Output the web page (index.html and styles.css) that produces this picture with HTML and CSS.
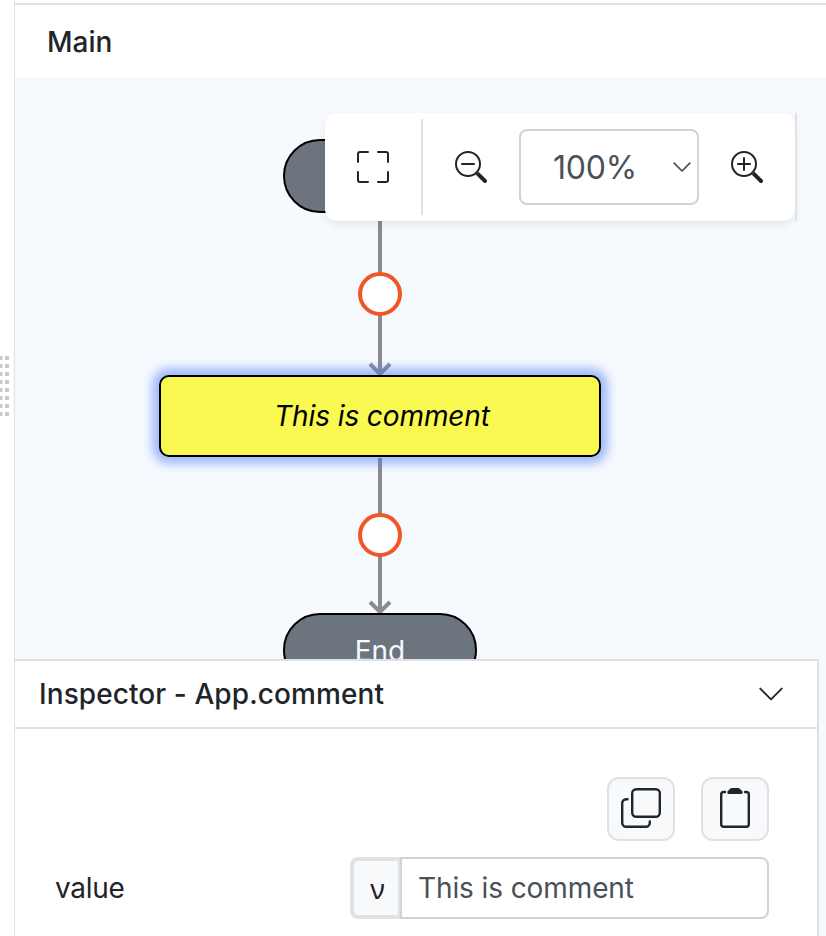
FILE: index.html
```html
<!DOCTYPE html>
<html lang="en">
<head>
<meta charset="utf-8">
<title>Main</title>
<link rel="stylesheet" href="styles.css">
</head>
<body>
<div class="app">
  <aside class="gutter"><div class="grip"></div></aside>
  <main class="editor">
    <header class="editor-head">Main</header>
    <section class="canvas">
      <svg class="edges" width="811" height="582" viewBox="15 77 811 582">
        <g fill="none" stroke="#8c8c8c" stroke-width="4">
          <path d="M380 213V374M370 364l10 10 10-10M380 458V612M370 602l10 10 10-10"/>
        </g>
        <g fill="#fff" stroke="#f05627" stroke-width="4">
          <circle cx="380" cy="294" r="20"/>
          <circle cx="380" cy="535" r="20"/>
        </g>
      </svg>
      <div class="node node-start">Start</div>
      <div class="node node-comment">This is comment</div>
      <div class="node node-end">End</div>
      <div class="toolbar">
        <button class="tool tool-fit" aria-label="Fit">
          <svg width="32" height="32" viewBox="0 0 16 16" fill="currentColor"><path d="M1.5 1a.5.5 0 0 0-.5.5v4a.5.5 0 0 1-1 0v-4A1.5 1.5 0 0 1 1.5 0h4a.5.5 0 0 1 0 1zM10 .5a.5.5 0 0 1 .5-.5h4A1.5 1.5 0 0 1 16 1.5v4a.5.5 0 0 1-1 0v-4a.5.5 0 0 0-.5-.5h-4a.5.5 0 0 1-.5-.5M.5 10a.5.5 0 0 1 .5.5v4a.5.5 0 0 0 .5.5h4a.5.5 0 0 1 0 1h-4A1.5 1.5 0 0 1 0 14.5v-4a.5.5 0 0 1 .5-.5m15 0a.5.5 0 0 1 .5.5v4a1.5 1.5 0 0 1-1.5 1.5h-4a.5.5 0 0 1 0-1h4a.5.5 0 0 0 .5-.5v-4a.5.5 0 0 1 .5-.5"/></svg>
        </button>
        <button class="tool" aria-label="Zoom out">
          <svg width="32" height="32" viewBox="0 0 16 16" fill="currentColor"><path fill-rule="evenodd" d="M6.5 12a5.5 5.5 0 1 0 0-11 5.5 5.5 0 0 0 0 11M13 6.5a6.5 6.5 0 1 1-13 0 6.5 6.5 0 0 1 13 0"/><path d="M10.344 11.742q.044.06.098.115l3.85 3.85a1 1 0 0 0 1.415-1.414l-3.85-3.85a1 1 0 0 0-.115-.1 6.5 6.5 0 0 1-1.398 1.4z"/><path d="M3 6.5a.5.5 0 0 1 .5-.5h6a.5.5 0 0 1 0 1h-6a.5.5 0 0 1-.5-.5"/></svg>
        </button>
        <div class="zoom-select"><span>100%</span>
          <svg width="18" height="11" viewBox="0 0 18 11" fill="none" stroke="currentColor" stroke-width="1.7" stroke-linecap="round" stroke-linejoin="round"><path d="M1.2 1.2 9 9l7.8-7.8"/></svg>
        </div>
        <button class="tool" aria-label="Zoom in">
          <svg width="32" height="32" viewBox="0 0 16 16" fill="currentColor"><path fill-rule="evenodd" d="M6.5 12a5.5 5.5 0 1 0 0-11 5.5 5.5 0 0 0 0 11M13 6.5a6.5 6.5 0 1 1-13 0 6.5 6.5 0 0 1 13 0"/><path d="M10.344 11.742q.044.06.098.115l3.85 3.85a1 1 0 0 0 1.415-1.414l-3.85-3.85a1 1 0 0 0-.115-.1 6.5 6.5 0 0 1-1.398 1.4z"/><path fill-rule="evenodd" d="M6.5 3a.5.5 0 0 1 .5.5V6h2.500a.5.5 0 0 1 0 1H7v2.500a.5.5 0 0 1-1 0V7H3.500a.5.5 0 0 1 0-1H6V3.500a.5.5 0 0 1 .5-.5"/></svg>
        </button>
      </div>
    </section>
    <div class="dock">
      <section class="inspector">
        <header class="inspector-head"><span>Inspector - App.comment</span>
          <svg width="24" height="14" viewBox="0 0 24 14" fill="none" stroke="currentColor" stroke-width="1.9" stroke-linecap="round" stroke-linejoin="round"><path d="M1.3 1.6 12 12.300 22.700 1.600"/></svg>
        </header>
        <div class="inspector-body">
          <div class="actions">
            <button class="action" aria-label="Copy">
              <svg width="40" height="40" viewBox="0 0 40 40" fill="none" stroke="currentColor" stroke-width="2.400" stroke-linecap="round"><rect x="11.200" y="1.200" width="27.600" height="27.600" rx="4"/><path d="M6.500 11.200H5.200a4 4 0 0 0-4 4v19.600a4 4 0 0 0 4 4h19.600a4 4 0 0 0 4-4v-1.300"/></svg>
            </button>
            <button class="action" aria-label="Paste">
              <svg width="40" height="40" viewBox="0 0 40 40" fill="none" stroke="currentColor" stroke-width="2.400" stroke-linecap="round"><path d="M10 4H8.700a2.500 2.500 0 0 0-2.500 2.500v29.800a2.500 2.500 0 0 0 2.500 2.500h22.600a2.500 2.500 0 0 0 2.500-2.500V6.500A2.500 2.500 0 0 0 31.300 4H30"/><path fill="currentColor" stroke="none" d="M17 0h6a3 3 0 0 1 2.800 2 2.300 2.300 0 0 1 1.900 2.300c0 1.100-.6 1.800-1.600 1.800H13.900c-1 0-1.600-.7-1.600-1.800A2.300 2.300 0 0 1 14.200 2 3 3 0 0 1 17 0"/></svg>
            </button>
          </div>
          <div class="field">
            <span class="label">value</span>
            <div class="group"><span class="kind">ν</span><span class="value">This is comment</span></div>
          </div>
        </div>
      </section>
    </div>
  </main>
</div>
</body>
</html>
```
FILE: styles.css
```css
* { box-sizing: border-box; }
body {
  margin: 0;
  font: 400 28px/1.5 Inter, sans-serif;
  color: #212529;
  background: #fff;
}
button { font: inherit; color: inherit; padding: 0; border: 0; background: none; }
svg { display: block; flex: none; }
.app { display: flex; width: 826px; height: 936px; overflow: hidden; }
.gutter { width: 15px; border-right: 1px solid #dee2e6; padding-top: 356px; }
.grip {
  width: 9px;
  height: 60px;
  background:
    repeating-linear-gradient(180deg, transparent 0 4px, #fff 4.5px 7.5px, transparent 8px),
    linear-gradient(90deg, #cbcbcb 0 2px, #e4e4e4 2px 3px, #fff 3px 5px, #cbcbcb 5px 9px);
}
.editor { flex: 1; min-width: 0; display: flex; flex-direction: column; padding-top: 3px; }
.editor-head {
  height: 74px;
  border-top: 2px solid #dee2e6;
  padding: 16px 32px 0;
  font-weight: 500;
}
.canvas { position: relative; height: 582px; overflow: hidden; background: #f6f9fe; }
.edges { position: absolute; inset: 0; }
.node {
  position: absolute;
  display: flex;
  align-items: center;
  justify-content: center;
  border: 2px solid #000;
}
.node-start, .node-end {
  left: 268px;
  width: 194px;
  height: 74px;
  border-radius: 40px;
  background: #6c757d;
  color: #f6f9fe;
}
.node-start { top: 62px; }
.node-end { top: 536px; padding-top: 1px; }
.node-comment {
  left: 144px;
  top: 298px;
  width: 442px;
  height: 82px;
  padding-left: 4px;
  border-radius: 10px;
  background: #faf951;
  color: #000;
  font-style: italic;
  letter-spacing: -.1px;
  box-shadow: 0 0 10px 7px rgba(70, 120, 245, .48);
}
.toolbar {
  position: absolute;
  left: 310px;
  top: 36px;
  width: 470px;
  height: 108px;
  display: flex;
  align-items: center;
  border-radius: 12px;
  background: #fff;
  box-shadow: 0 4px 8px rgba(0, 0, 0, .075);
}
.toolbar::after {
  content: "";
  position: absolute;
  left: 100%;
  top: 0;
  width: 2px;
  height: 108px;
  background: #dee2e6;
}
.tool { width: 96px; height: 96px; display: flex; align-items: center; justify-content: center; }
.tool-fit { width: 98px; border-right: 2px solid #dee2e6; }
.zoom-select {
  width: 180px;
  height: 76px;
  display: flex;
  align-items: center;
  justify-content: space-between;
  padding: 0 6px 0 32px;
  border: 2px solid #ced4da;
  border-radius: 8px;
  font-size: 32px;
  letter-spacing: -.2px;
  color: #495057;
}
.zoom-select span { padding-top: 2px; }
.dock { flex: 1; padding-right: 7px; background: #f6f9fe; }
.inspector {
  height: 100%;
  border: solid #dee2e6;
  border-width: 2px 2px 0 0;
  background: #fff;
}
.inspector-head {
  height: 68px;
  display: flex;
  align-items: center;
  justify-content: space-between;
  padding: 0 34px 0 24px;
  border-bottom: 2px solid #dee2e6;
  font-weight: 500;
  letter-spacing: .09px;
}
.inspector-body { padding: 48px 48px 0 40px; }
.actions { display: flex; justify-content: flex-end; gap: 26px; }
.action {
  width: 68px;
  height: 64px;
  display: flex;
  align-items: center;
  justify-content: center;
  padding-bottom: 2px;
  border: 2px solid #dee2e6;
  border-radius: 12px;
  background: #f8f9fb;
}
.field { display: flex; align-items: center; justify-content: space-between; margin-top: 16px; }
.label { letter-spacing: -.3px; }
.group { display: flex; width: 419px; height: 62px; }
.kind {
  width: 50px;
  display: flex;
  align-items: center;
  justify-content: center;
  padding-left: 3px;
  border: 4px solid #dee2e6;
  border-right-width: 2px;
  border-radius: 8px 0 0 8px;
  background: #f8f9fb;
  font-family: "Noto Sans", sans-serif;
}
.value {
  flex: 1;
  display: flex;
  align-items: center;
  padding: 0 16px;
  border: 2px solid #ced4da;
  border-radius: 0 8px 8px 0;
  color: #495057;
  letter-spacing: -.1px;
}
```
